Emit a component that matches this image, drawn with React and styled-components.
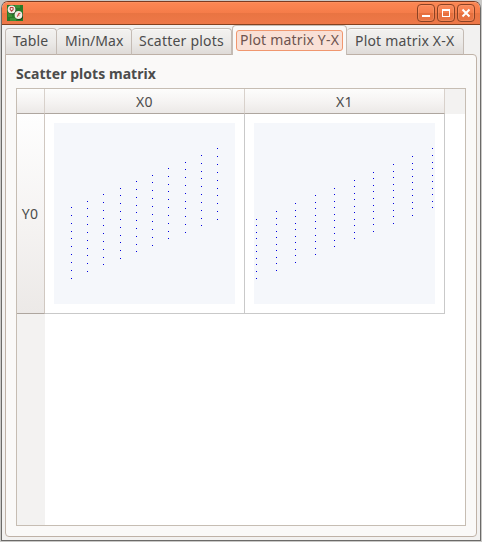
import React from 'react';
import styled, { createGlobalStyle, css } from 'styled-components';

const GlobalStyle = createGlobalStyle`
  * { box-sizing: border-box; }
  body {
    margin: 0;
    background: #c9c8c6;
    color: #4c4c4c;
    font: 14px/20px "Noto Sans", "Open Sans", sans-serif;
    overflow: hidden;
  }
`;

const Window = styled.div`
  width: 480px;
  height: 540px;
  margin: 1px 1px 1px;
  border: 1px solid #6b6a68;
  border-top-color: #7d3a20;
  border-radius: 7px 7px 0 0;
  background: #f2f1f0;
  display: flex;
  flex-direction: column;
  overflow: hidden;
`;

const TitleBar = styled.header`
  height: 23px;
  flex: none;
  display: flex;
  align-items: center;
  justify-content: space-between;
  padding: 0 5px;
  border-bottom: 1px solid #84411f;
  background: linear-gradient(#ff9a69 0, #fb8653 1px, #f57c49 11px, #e97442 11px, #ee7848 22px);
`;

const TitleButtons = styled.div`
  display: flex;
  gap: 2px;
`;

const TitleButton = styled.span`
  width: 18px;
  height: 18px;
  border: 1px solid #8b4224;
  border-radius: 4px;
  background: linear-gradient(#fb8a5b, #f47d4b 50%, #e66f3d 50%, #ea7444);
  box-shadow: inset 0 0 0 1px rgba(255, 165, 120, 0.35);
  svg { display: block; }
`;

const Content = styled.main`
  flex: 1;
  display: flex;
  flex-direction: column;
  padding: 0 3px 4px;
`;

const TabBar = styled.nav`
  height: 30px;
  flex: none;
  display: flex;
  align-items: flex-end;
  position: relative;
  z-index: 1;
`;

const Tab = styled.div`
  width: ${(p) => p.$width}px;
  height: 27px;
  padding: 2px 0 0 ${(p) => p.$inset}px;
  border: 1px solid #c4bbb4;
  border-left-width: ${(p) => (p.$joined ? 0 : 1)}px;
  border-bottom-color: #bdb0a6;
  border-radius: 4px 4px 0 0;
  background: linear-gradient(#f3f2f0, #ebe9e7 55%, #dfdbd8);
  box-shadow: inset 0 1px #faf9f8;
  white-space: nowrap;
  ${(p) => p.$active && css`
    height: 30px;
    padding: 4px 0 0 3px;
    border-bottom: 0;
    background: #faf9f8;
  `}
`;

const FocusFrame = styled.div`
  width: 107px;
  height: 21px;
  padding-left: 3px;
  line-height: 18px;
  border: 1px solid #f0976f;
  border-radius: 3px;
  background: #f9e0d6;
  color: #6d5450;
`;

const Label = styled.span`
  display: block;
  letter-spacing: ${(p) => p.$spacing || 0}px;
`;

const Pane = styled.section`
  flex: 1;
  margin-top: -1px;
  border: 1px solid #bfb2a7;
  border-radius: 0 4px 4px 4px;
  background: #faf9f8;
  padding: 9px 10px 10px;
  display: flex;
  flex-direction: column;
`;

const Heading = styled.h1`
  margin: 0 0 4px;
  height: 20px;
  font-size: 14px;
  line-height: 20px;
  font-weight: 700;
  letter-spacing: ${(p) => p.$spacing}px;
  white-space: nowrap;
`;

const Matrix = styled.div`
  width: 450px;
  height: 438px;
  border: 1px solid #c6bdb3;
  background: #fff;
  display: grid;
  grid-template-columns: 28px 200px 200px 1fr;
  grid-template-rows: 25px 200px 1fr;
`;

const ColumnHeader = styled.div`
  display: flex;
  align-items: center;
  justify-content: center;
  padding-top: 2px;
  letter-spacing: 0.4px;
  border-right: 1px solid #d8d1cb;
  border-bottom: 1px solid #aea69f;
  background: linear-gradient(#fdfdfc, #f5f3f2 55%, #ece9e7);
`;

const RowHeader = styled.div`
  display: flex;
  align-items: center;
  justify-content: center;
  padding-right: 1px;
  letter-spacing: 0.4px;
  border-right: 1px solid #d0c8c1;
  border-bottom: 1px solid #aea69f;
  background: linear-gradient(#fefefe, #f5f3f2 55%, #ece9e7);
`;

const HeaderFill = styled.div`
  background: #f3f2f1;
`;

const PlotCell = styled.div`
  padding: 9px;
  border-right: 1px solid #c9c9c9;
  border-bottom: 1px solid #c9c9c9;
`;

const PlotArea = styled.svg`
  display: block;
  width: 181px;
  height: 181px;
  background: #f5f7fb;
  fill: #0000e0;
`;

const x0Series = [
  [17, [84, 92, 100, 108, 115, 123, 131, 139, 147, 155]],
  [33, [78, 85, 93, 101, 109, 117, 125, 132, 140, 148]],
  [49, [71, 79, 87, 95, 102, 110, 118, 126, 134, 141]],
  [66, [65, 72, 80, 88, 96, 104, 112, 119, 127, 135]],
  [82, [58, 66, 74, 82, 89, 97, 105, 113, 121, 128]],
  [98, [52, 59, 67, 75, 83, 91, 98, 106, 114, 122]],
  [114, [45, 53, 61, 68, 76, 84, 92, 100, 108, 115]],
  [131, [39, 46, 54, 62, 70, 78, 85, 93, 101, 109]],
  [147, [32, 40, 48, 55, 63, 71, 79, 87, 95, 102]],
  [163, [25, 33, 41, 49, 57, 65, 72, 80, 88, 96]],
];

const x1Series = [
  [2, [96, 102, 109, 115, 122, 128, 135, 141, 148, 155]],
  [22, [88, 95, 101, 108, 114, 121, 127, 134, 140, 147]],
  [41, [80, 87, 93, 100, 106, 113, 119, 126, 132, 139]],
  [61, [72, 79, 85, 92, 98, 105, 112, 118, 125, 131]],
  [80, [65, 71, 78, 84, 91, 97, 104, 110, 117, 123]],
  [100, [57, 63, 70, 76, 83, 89, 96, 102, 109, 115]],
  [119, [49, 55, 62, 68, 75, 82, 88, 95, 101, 108]],
  [139, [41, 48, 54, 61, 67, 74, 80, 87, 93, 100]],
  [158, [33, 40, 46, 53, 59, 66, 72, 79, 85, 92]],
  [178, [25, 32, 39, 45, 52, 58, 65, 71, 78, 84]],
];

function ScatterPlot({ series }) {
  return (
    <PlotArea viewBox="0 0 181 181" shapeRendering="crispEdges">
      {series.map(([x, ys]) =>
        ys.map((y) => <rect key={`${x}-${y}`} x={x} y={y} width="1" height="1" />)
      )}
    </PlotArea>
  );
}

function AppIcon() {
  return (
    <svg width="16" height="16" viewBox="0 0 16 16">
      <rect width="16" height="16" fill="#287a28" />
      <path d="M1 8h4v4H1zM8 0h5v3H8zM3 13h6v3H3z" fill="#3c8f35" />
      <circle cx="5" cy="5.2" r="4.1" fill="#173f17" />
      <circle cx="12" cy="10.8" r="4.1" fill="#173f17" />
      <circle cx="4.6" cy="4.4" r="3.9" fill="#f1ece2" />
      <circle cx="11.5" cy="10" r="3.9" fill="#f1ece2" />
      <path d="M3 2.5h3.4M3.2 2.8v1.8l1.4 1.5L6.1 4.6V2.8" fill="none" stroke="#b94343" strokeWidth="1.1" />
      <path d="M10.3 11.8l1.4-3.4h1.7M11 10h1.5" fill="none" stroke="#c73b3b" strokeWidth="1" />
    </svg>
  );
}

function ButtonGlyph({ d }) {
  return (
    <svg width="16" height="16" viewBox="0 0 16 16">
      <path d={d} fill="none" stroke="#fff" strokeWidth="2" />
    </svg>
  );
}

export default function App() {
  return (
    <>
      <GlobalStyle />
      <Window>
        <TitleBar>
          <AppIcon />
          <TitleButtons>
            <TitleButton><ButtonGlyph d="M4 11h8" /></TitleButton>
            <TitleButton>
              <svg width="16" height="16" viewBox="0 0 16 16">
                <path d="M4 4h8v8H4zM5 6v5h6V6z" fill="#fff" fillRule="evenodd" />
              </svg>
            </TitleButton>
            <TitleButton><ButtonGlyph d="M4.5 4.5l7 7M11.5 4.5l-7 7" /></TitleButton>
          </TitleButtons>
        </TitleBar>
        <Content>
          <TabBar>
            <Tab $width={52} $inset={7}><Label $spacing={0.15}>Table</Label></Tab>
            <Tab $width={75} $inset={8} $joined><Label $spacing={0.05}>Min/Max</Label></Tab>
            <Tab $width={100} $inset={7} $joined><Label $spacing={0.22}>Scatter plots</Label></Tab>
            <Tab $width={115} $active>
              <FocusFrame><Label $spacing={0.18}>Plot matrix Y-X</Label></FocusFrame>
            </Tab>
            <Tab $width={117} $inset={8} $joined><Label $spacing={0.18}>Plot matrix X-X</Label></Tab>
          </TabBar>
          <Pane>
            <Heading $spacing={0.05}>Scatter plots matrix</Heading>
            <Matrix>
              <ColumnHeader />
              <ColumnHeader>X0</ColumnHeader>
              <ColumnHeader>X1</ColumnHeader>
              <HeaderFill />
              <RowHeader>Y0</RowHeader>
              <PlotCell><ScatterPlot series={x0Series} /></PlotCell>
              <PlotCell><ScatterPlot series={x1Series} /></PlotCell>
              <div />
              <HeaderFill />
            </Matrix>
          </Pane>
        </Content>
      </Window>
    </>
  );
}
